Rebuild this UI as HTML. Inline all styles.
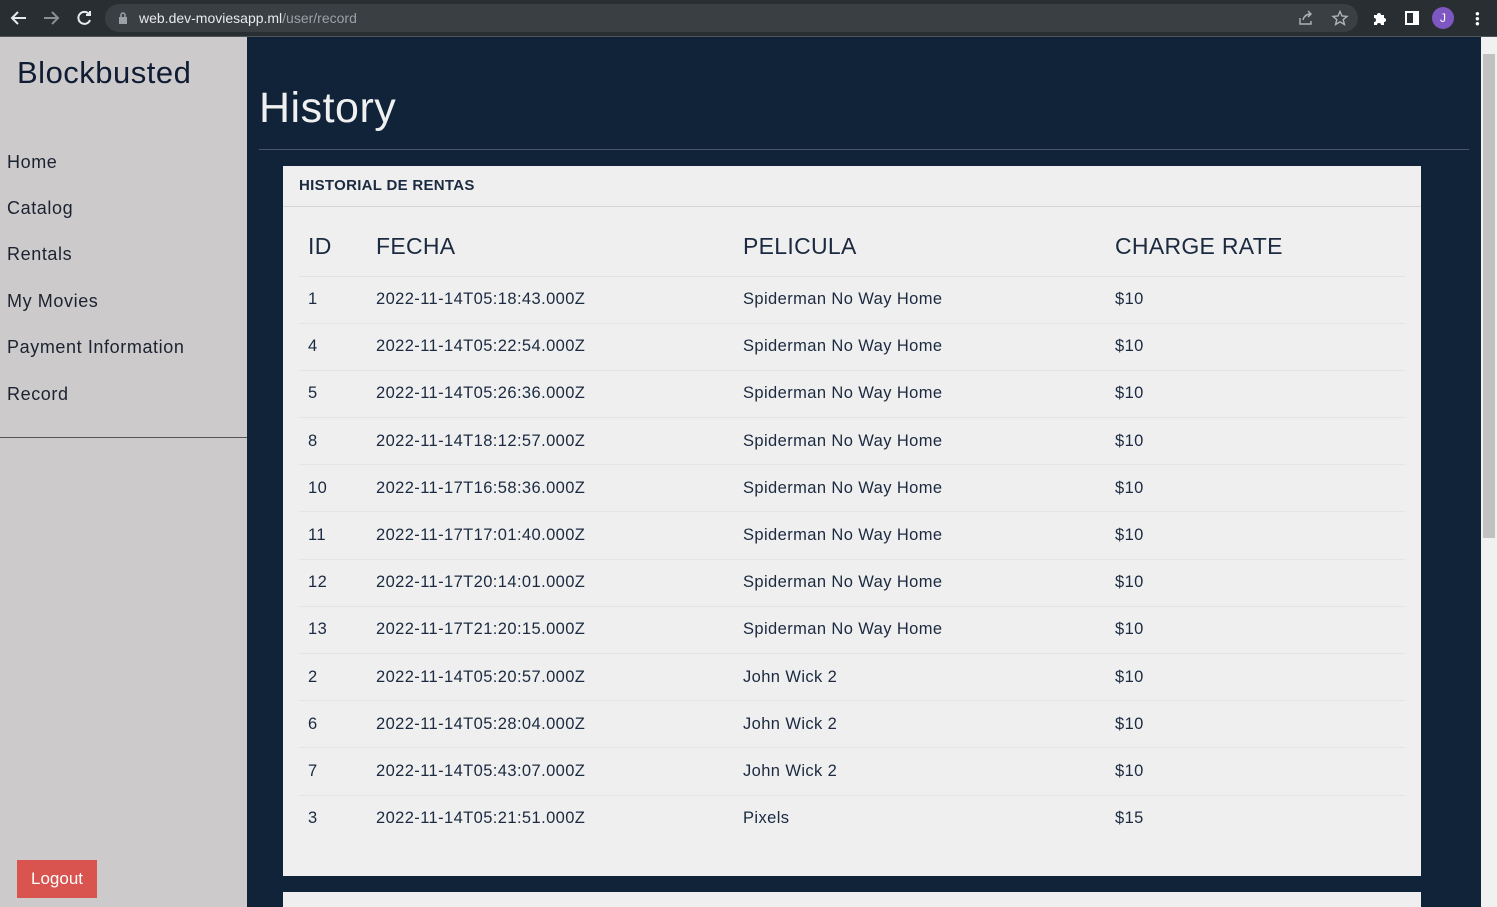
<!DOCTYPE html><html><head><style>
*{margin:0;padding:0;box-sizing:border-box}
html,body{width:1497px;height:907px;overflow:hidden}
body{font-family:"Liberation Sans",sans-serif;background:#102339;position:relative}
.tb{position:absolute;left:0;top:0;width:1497px;height:37px;background:#292e33;border-bottom:1px solid #50555a}
.url{position:absolute;left:105px;top:4px;width:1253px;height:28px;border-radius:14px;background:#3a3f44;color:#e8eaed;font-size:14px;line-height:28px;padding-left:34px}
.url span{color:#9aa0a6}
.side{position:absolute;left:0;top:37px;width:247px;height:870px;background:#cccacb}
.side h1{position:absolute;left:17px;top:18px;font-size:31px;font-weight:normal;color:#0f1c33;letter-spacing:.5px}
.side a{position:absolute;left:7px;font-size:18px;color:#1b2230;letter-spacing:.6px}
.side hr{position:absolute;left:0;top:400px;width:247px;border:0;border-top:1px solid #555}
.lo{position:absolute;left:17px;top:823px;width:80px;height:38px;background:#d9534f;color:#fff;font-size:17px;text-align:center;line-height:38px}
.main h2{position:absolute;left:259px;top:84px;font-size:43px;font-weight:normal;color:#f0f0f0;letter-spacing:.5px}
.line{position:absolute;left:259px;top:149px;width:1210px;border-top:1px solid #4a5668}
.card{position:absolute;left:283px;top:166px;width:1138px;height:710px;background:#efefef}
.card2{position:absolute;left:283px;top:892px;width:1138px;height:15px;background:#efefef}
.ch{height:41px;border-bottom:1px solid #d5d5d5;padding:11px 16px;font-weight:bold;font-size:15px;color:#1b2a40;letter-spacing:.3px}
table{position:absolute;left:16px;top:58px;width:1106px;border-collapse:collapse;color:#1b2a40}
th{font-size:23px;font-weight:normal;text-align:left;height:55px;vertical-align:top;padding-top:9px;border-bottom:1px solid #e2e2e2;letter-spacing:.3px}
tr.h th{height:52px}
td{font-size:16.5px;height:47.2px;border-bottom:1px solid #e4e4e4;letter-spacing:.4px}
tr:last-child td{border-bottom:0}
th:first-child,td:first-child{padding-left:9px}
.sb{position:absolute;left:1481px;top:37px;width:16px;height:870px;background:#f1f1f1}
.th{position:absolute;left:1483px;top:54px;width:12px;height:484px;background:#c1c1c1}
</style></head><body>
<div class="tb">
<svg style="position:absolute;left:8px;top:8px" width="90" height="20" fill="none" stroke-width="2"><path d="M18 10H4M10 4L4 10l6 6" stroke="#e8eaed"/><path d="M36 10h14M44 4l6 6-6 6" stroke="#8a8f94"/><path d="M81 6a6 6 0 1 0 1 6M82 3v4h-4" stroke="#e8eaed"/></svg>
<div class="url"><svg style="position:absolute;left:13px;top:8px" width="10" height="12"><rect x="1" y="5" width="8" height="7" fill="#9aa0a6"/><path d="M3 5V3a2 2 0 0 1 4 0v2" stroke="#9aa0a6" fill="none" stroke-width="1.5"/></svg>web.dev-moviesapp.ml<span>/user/record</span>
<svg style="position:absolute;left:1193px;top:6px" width="60" height="16" fill="none" stroke="#b0b4b8" stroke-width="1.4"><path d="M2 8v6h11v-3M5 10c1-4 4-6 8-6M10 1l3 3-3 3"/><path d="M42 1.5l2 4.5 5 .4-3.8 3.2 1.2 4.9L42 11.8 37.6 14.5l1.2-4.9L35 6.4l5-.4z"/></svg></div>
<svg style="position:absolute;left:1372px;top:10px" width="16" height="16" fill="#fff"><path d="M2 5h3a2 2 0 0 1 4 0h3v3a2 2 0 0 1 0 4v3H9a2 2 0 0 0-4 0H2v-3a2 2 0 0 0 0-4z"/></svg>
<div style="position:absolute;left:1432px;top:7px;width:22px;height:22px;border-radius:11px;background:#7e57c2;color:#fff;font-size:12px;text-align:center;line-height:22px">J</div>
<div style="position:absolute;left:1405px;top:11px;width:14px;height:14px;border:2px solid #fff;border-right-width:6px"></div>
<div style="position:absolute;left:1475px;top:11px;color:#fff;font-size:8px;line-height:5px">●<br>●<br>●</div>
</div>
<div class="side"><h1>Blockbusted</h1>
<a style="top:115px">Home</a><a style="top:161px">Catalog</a><a style="top:207px">Rentals</a><a style="top:254px">My Movies</a><a style="top:300px">Payment Information</a><a style="top:347px">Record</a>
<hr><div class="lo">Logout</div></div>
<div class="main"><h2>History</h2><div class="line"></div></div>
<div class="card"><div class="ch">HISTORIAL DE RENTAS</div>
<table><tr class="h"><th style="width:77px">ID</th><th style="width:367px">FECHA</th><th style="width:372px">PELICULA</th><th>CHARGE RATE</th></tr>
<tr><td>1</td><td>2022-11-14T05:18:43.000Z</td><td>Spiderman No Way Home</td><td>$10</td></tr>
<tr><td>4</td><td>2022-11-14T05:22:54.000Z</td><td>Spiderman No Way Home</td><td>$10</td></tr>
<tr><td>5</td><td>2022-11-14T05:26:36.000Z</td><td>Spiderman No Way Home</td><td>$10</td></tr>
<tr><td>8</td><td>2022-11-14T18:12:57.000Z</td><td>Spiderman No Way Home</td><td>$10</td></tr>
<tr><td>10</td><td>2022-11-17T16:58:36.000Z</td><td>Spiderman No Way Home</td><td>$10</td></tr>
<tr><td>11</td><td>2022-11-17T17:01:40.000Z</td><td>Spiderman No Way Home</td><td>$10</td></tr>
<tr><td>12</td><td>2022-11-17T20:14:01.000Z</td><td>Spiderman No Way Home</td><td>$10</td></tr>
<tr><td>13</td><td>2022-11-17T21:20:15.000Z</td><td>Spiderman No Way Home</td><td>$10</td></tr>
<tr><td>2</td><td>2022-11-14T05:20:57.000Z</td><td>John Wick 2</td><td>$10</td></tr>
<tr><td>6</td><td>2022-11-14T05:28:04.000Z</td><td>John Wick 2</td><td>$10</td></tr>
<tr><td>7</td><td>2022-11-14T05:43:07.000Z</td><td>John Wick 2</td><td>$10</td></tr>
<tr><td>3</td><td>2022-11-14T05:21:51.000Z</td><td>Pixels</td><td>$15</td></tr>
</table></div>
<div class="card2"></div>
<div class="sb"></div><div class="th"></div>
</body></html>
